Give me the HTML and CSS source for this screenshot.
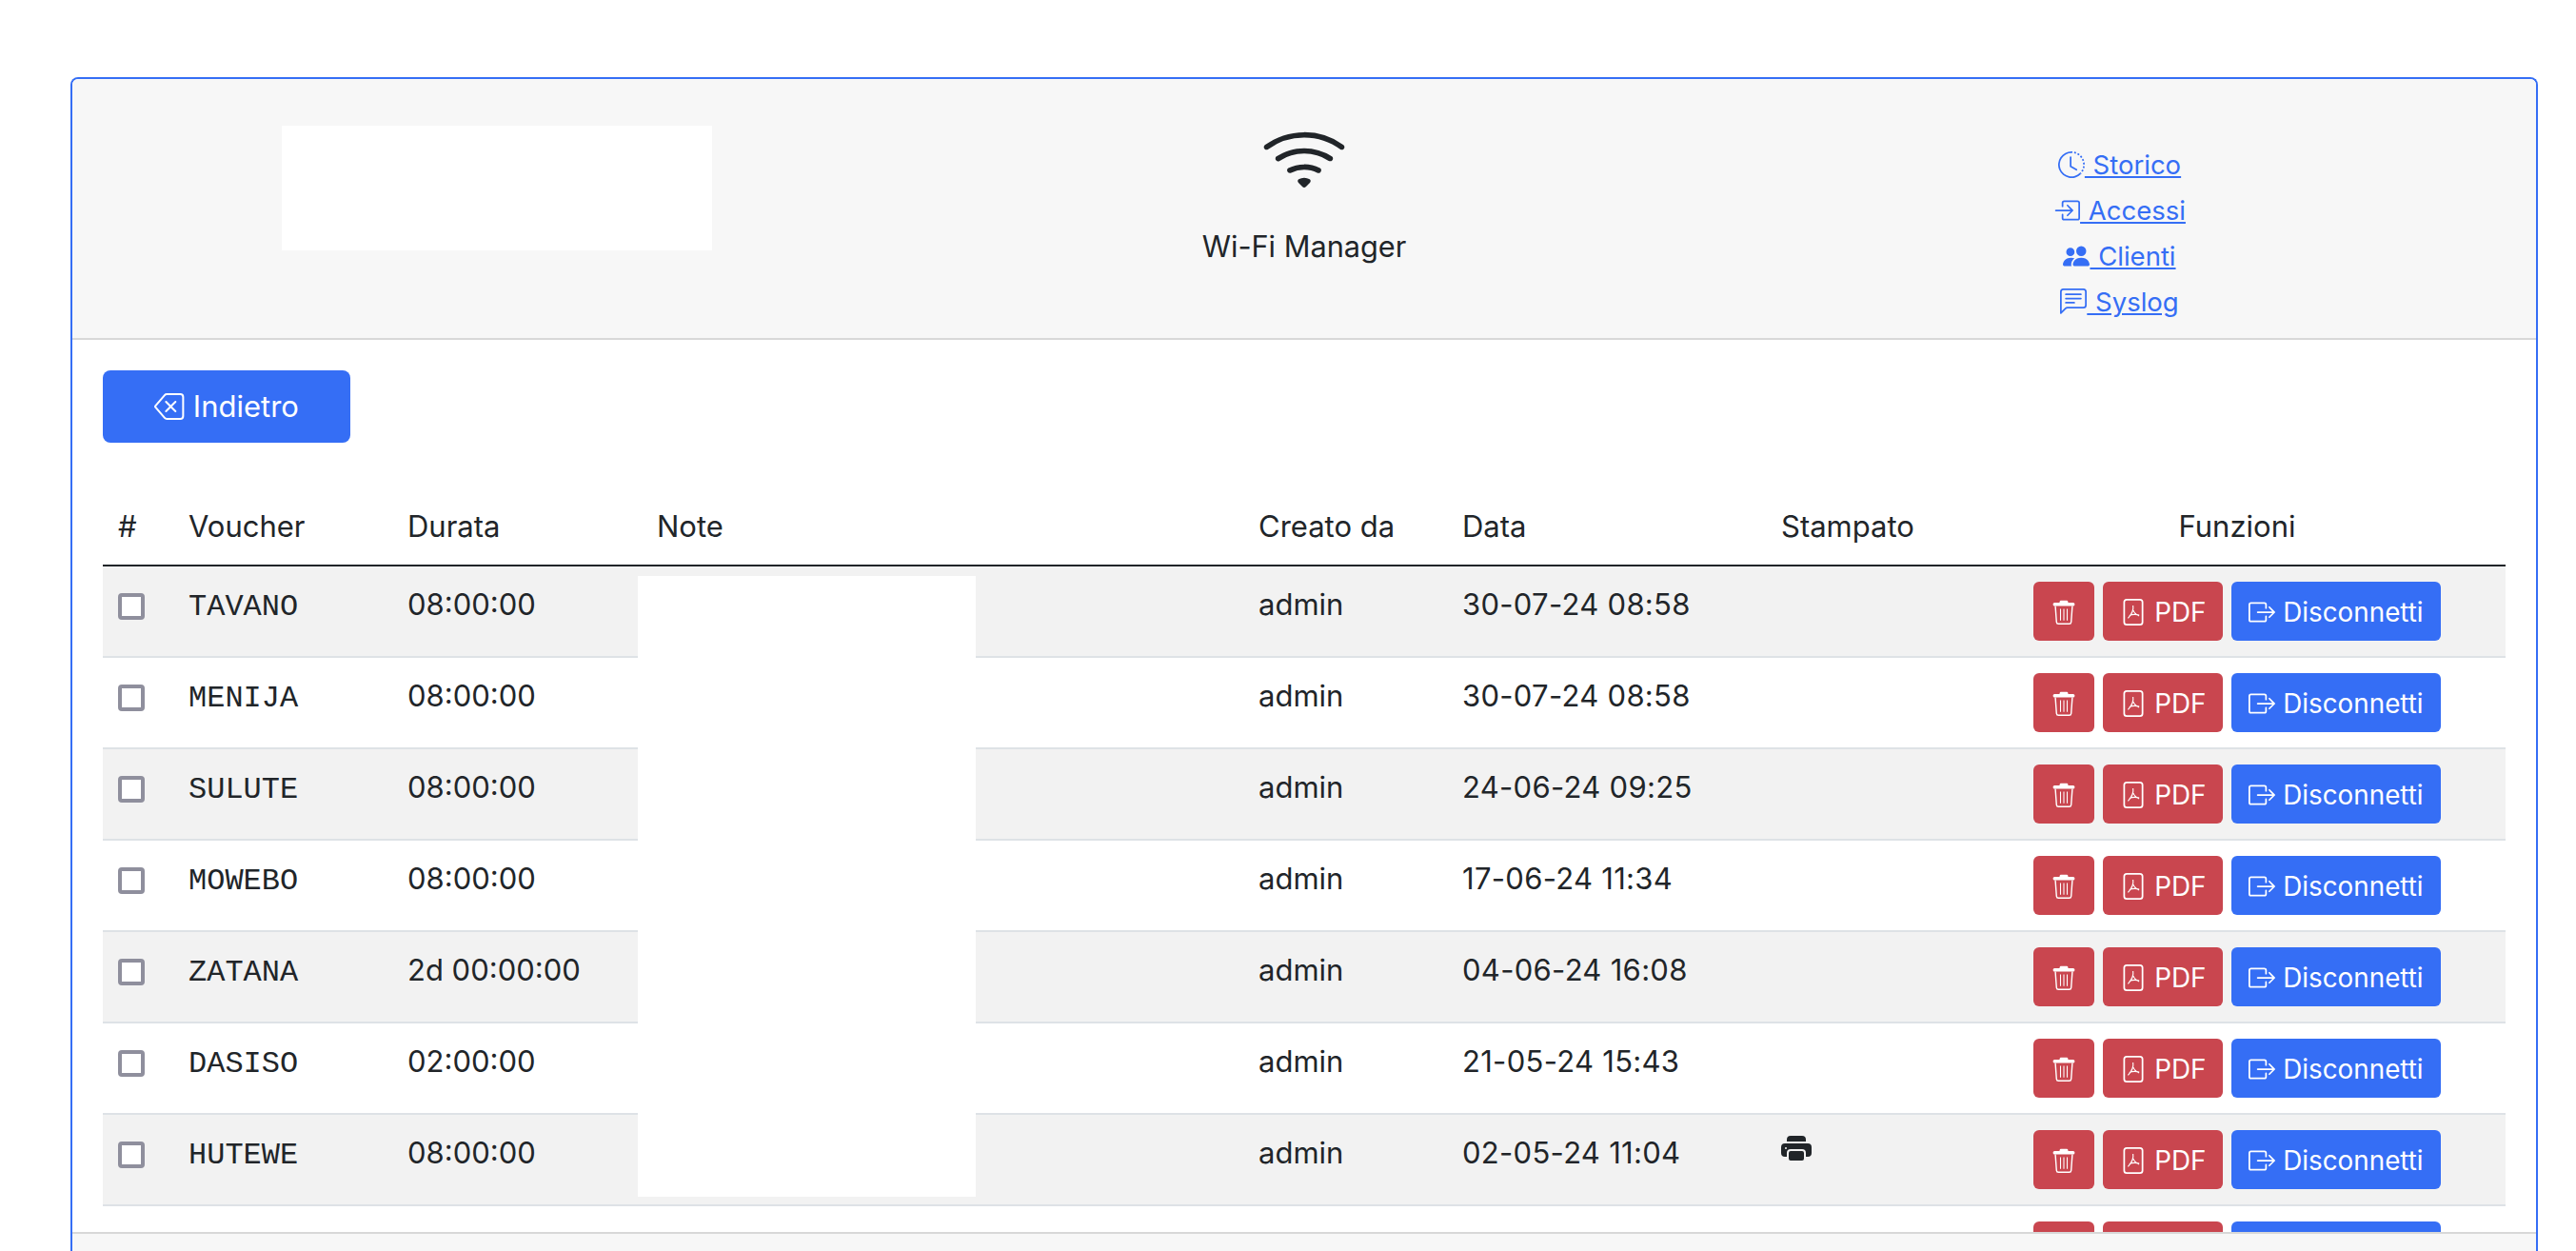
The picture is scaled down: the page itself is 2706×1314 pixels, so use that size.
FILE: index.html
```html
<!DOCTYPE html>
<html lang="en">
<head>
  <meta charset="UTF-8">
  <title>Wi-Fi Manager</title>
  <link rel="stylesheet" href="styles.css">
</head>
<body>
  <svg class="sprite" xmlns="http://www.w3.org/2000/svg">
    <symbol id="i-wifi" viewBox="0 0 16 16">
      <path d="M15.384 6.115a.485.485 0 0 0-.047-.736A12.44 12.44 0 0 0 8 3C5.259 3 2.723 3.882.663 5.379a.485.485 0 0 0-.048.736.518.518 0 0 0 .668.05A11.448 11.448 0 0 1 8 4c2.507 0 4.827.802 6.716 2.164.205.148.49.13.668-.049z"/>
      <path d="M13.229 8.271a.482.482 0 0 0-.063-.745A9.455 9.455 0 0 0 8 6c-1.905 0-3.68.56-5.166 1.526a.48.48 0 0 0-.063.745.525.525 0 0 0 .652.065A8.46 8.46 0 0 1 8 7a8.46 8.46 0 0 1 4.576 1.336c.206.132.48.108.653-.065zm-2.183 2.183c.226-.226.185-.605-.1-.75A6.473 6.473 0 0 0 8 9c-1.06 0-2.062.254-2.946.704-.285.145-.326.524-.1.75l.015.015c.16.16.407.19.611.09A5.478 5.478 0 0 1 8 10c.868 0 1.69.201 2.42.56.203.1.45.07.61-.091l.016-.015zM9.06 12.44c.196-.196.198-.52-.04-.66A1.99 1.99 0 0 0 8 11.5a1.99 1.99 0 0 0-1.02.28c-.238.14-.236.464-.04.66l.706.706a.5.5 0 0 0 .707 0l.707-.707z"/>
    </symbol>
    <symbol id="i-history" viewBox="0 0 16 16">
      <path d="M8.515 1.019A7 7 0 0 0 8 1V0a8 8 0 0 1 .589.022l-.074.997zm2.004.45a7.003 7.003 0 0 0-.985-.299l.219-.976c.383.086.76.2 1.126.342l-.36.933zm1.37.71a7.01 7.01 0 0 0-.439-.27l.493-.87a8.025 8.025 0 0 1 .979.654l-.615.789a6.996 6.996 0 0 0-.418-.302zm1.834 1.79a6.99 6.99 0 0 0-.653-.796l.724-.69c.27.285.52.59.747.91l-.818.576zm.744 1.352a7.08 7.08 0 0 0-.214-.468l.893-.45a7.976 7.976 0 0 1 .45 1.088l-.95.313a7.023 7.023 0 0 0-.179-.483zm.53 2.507a6.991 6.991 0 0 0-.1-1.025l.985-.17c.067.386.106.778.116 1.17l-1 .025zm-.131 1.538c.033-.17.06-.339.081-.51l.993.123a7.957 7.957 0 0 1-.23 1.155l-.964-.267c.046-.165.086-.332.12-.501zm-.952 2.379c.184-.29.346-.594.486-.908l.914.405c-.16.36-.345.706-.555 1.038l-.845-.535zm-.964 1.205c.122-.122.239-.248.35-.378l.758.653a8.073 8.073 0 0 1-.401.432l-.707-.707z"/>
      <path d="M8 1a7 7 0 1 0 4.95 11.95l.707.707A8.001 8.001 0 1 1 8 0v1z"/>
      <path d="M7.5 3a.5.5 0 0 1 .5.5v5.21l3.248 1.856a.5.5 0 0 1-.496.868l-3.5-2A.5.5 0 0 1 7 9V3.5a.5.5 0 0 1 .5-.5z"/>
    </symbol>
    <symbol id="i-login" viewBox="0 0 16 16">
      <path fill-rule="evenodd" d="M6 3.5a.5.5 0 0 1 .5-.5h8a.5.5 0 0 1 .5.5v9a.5.5 0 0 1-.5.5h-8a.5.5 0 0 1-.5-.5v-2a.5.5 0 0 0-1 0v2A1.5 1.5 0 0 0 6.5 14h8a1.5 1.5 0 0 0 1.5-1.5v-9A1.5 1.5 0 0 0 14.5 2h-8A1.5 1.5 0 0 0 5 3.5v2a.5.5 0 0 0 1 0v-2z"/>
      <path fill-rule="evenodd" d="M11.854 8.354a.5.5 0 0 0 0-.708l-3-3a.5.5 0 1 0-.708.708L10.293 7.5H1.5a.5.5 0 0 0 0 1h8.793l-2.147 2.146a.5.5 0 0 0 .708.708l3-3z"/>
    </symbol>
    <symbol id="i-people" viewBox="0 0 16 16">
      <path d="M7 14s-1 0-1-1 1-4 5-4 5 3 5 4-1 1-1 1H7Zm4-6a3 3 0 1 0 0-6 3 3 0 0 0 0 6Zm-5.784 6A2.238 2.238 0 0 1 5 13c0-1.355.68-2.75 1.936-3.72A6.325 6.325 0 0 0 5 9c-4 0-5 3-5 4s1 1 1 1h4.216ZM4.5 8a2.5 2.5 0 1 0 0-5 2.5 2.5 0 0 0 0 5Z"/>
    </symbol>
    <symbol id="i-chat" viewBox="0 0 16 16">
      <path d="M14 1a1 1 0 0 1 1 1v8a1 1 0 0 1-1 1H4.414A2 2 0 0 0 3 11.586l-2 2V2a1 1 0 0 1 1-1h12zM2 0a2 2 0 0 0-2 2v12.793a.5.5 0 0 0 .854.353l2.853-2.853A1 1 0 0 1 4.414 12H14a2 2 0 0 0 2-2V2a2 2 0 0 0-2-2H2z"/>
      <path d="M3 3.5a.5.5 0 0 1 .5-.5h9a.5.5 0 0 1 0 1h-9a.5.5 0 0 1-.5-.5zM3 6a.5.5 0 0 1 .5-.5h9a.5.5 0 0 1 0 1h-9A.5.5 0 0 1 3 6zm0 2.5a.5.5 0 0 1 .5-.5h5a.5.5 0 0 1 0 1h-5a.5.5 0 0 1-.5-.5z"/>
    </symbol>
    <symbol id="i-back" viewBox="0 0 16 16">
      <path d="M5.83 5.146a.5.5 0 0 0 0 .708L7.975 8l-2.147 2.146a.5.5 0 0 0 .707.708l2.147-2.147 2.146 2.147a.5.5 0 0 0 .707-.708L9.39 8l2.146-2.146a.5.5 0 0 0-.707-.708L8.683 7.293 6.536 5.146a.5.5 0 0 0-.707 0z"/>
      <path d="M13.683 1a2 2 0 0 1 2 2v10a2 2 0 0 1-2 2h-7.08a2 2 0 0 1-1.519-.698L.241 8.65a1 1 0 0 1 0-1.302L5.084 1.7A2 2 0 0 1 6.603 1h7.08zm-7.08 1a1 1 0 0 0-.76.35L1 8l4.844 5.65a1 1 0 0 0 .759.35h7.08a1 1 0 0 0 1-1V3a1 1 0 0 0-1-1h-7.08z"/>
    </symbol>
    <symbol id="i-trash" viewBox="0 0 16 16">
      <rect x="5.5" y="1" width="5" height="2.4" rx=".8"/>
      <rect x="1.5" y="2.3" width="13" height="2" rx=".9"/>
      <path d="M2.9 4.3l.7 9.6a1.2 1.2 0 0 0 1.2 1.1h6.4a1.2 1.2 0 0 0 1.2-1.1l.7-9.6" fill="none" stroke="currentColor" stroke-width=".8"/>
      <path d="M6 6v7M8 6v7M10 6v7" fill="none" stroke="currentColor" stroke-width=".6"/>
    </symbol>
    <symbol id="i-pdf" viewBox="0 0 16 16">
      <path d="M4 0a2 2 0 0 0-2 2v12a2 2 0 0 0 2 2h8a2 2 0 0 0 2-2V2a2 2 0 0 0-2-2H4zm0 1h8a1 1 0 0 1 1 1v12a1 1 0 0 1-1 1H4a1 1 0 0 1-1-1V2a1 1 0 0 1 1-1z"/>
      <path d="M7.8 4c.5 2.500-1 5.500-3 7.600M7.900 6.800c.7 1.700 1.700 2.800 3.600 3.400M5.600 10c1.800-.7 3.600-.9 5.900-.2" fill="none" stroke="currentColor" stroke-width=".65"/>
    </symbol>
    <symbol id="i-logout" viewBox="0 0 16 16">
      <path fill-rule="evenodd" d="M10 12.5a.5.5 0 0 1-.5.5h-8a.5.5 0 0 1-.5-.5v-9a.5.5 0 0 1 .5-.5h8a.5.5 0 0 1 .5.5v2a.5.5 0 0 0 1 0v-2A1.5 1.5 0 0 0 9.500 2h-8A1.500 1.500 0 0 0 0 3.500v9A1.500 1.500 0 0 0 1.500 14h8a1.500 1.500 0 0 0 1.500-1.500v-2a.5.5 0 0 0-1 0v2z"/>
      <path fill-rule="evenodd" d="M15.854 8.354a.5.5 0 0 0 0-.708l-3-3a.5.5 0 0 0-.708.708L14.293 7.500H5.500a.5.5 0 0 0 0 1h8.793l-2.147 2.146a.5.5 0 0 0 .708.708l3-3z"/>
    </symbol>
    <symbol id="i-printer" viewBox="0 0 16 16">
      <path d="M5 1a2 2 0 0 0-2 2v1h10V3a2 2 0 0 0-2-2H5zm6 8H5a1 1 0 0 0-1 1v3a1 1 0 0 0 1 1h6a1 1 0 0 0 1-1v-3a1 1 0 0 0-1-1z"/>
      <path d="M0 7a2 2 0 0 1 2-2h12a2 2 0 0 1 2 2v3a2 2 0 0 1-2 2h-1v-2a2 2 0 0 0-2-2H5a2 2 0 0 0-2 2v2H2a2 2 0 0 1-2-2V7zm2.500 1a.5.5 0 1 0 0-1 .5.5 0 0 0 0 1z"/>
    </symbol>
  </svg>

  <div class="card">
    <div class="card-header">
      <div class="head-logo"><div class="logo-box"></div></div>
      <div class="head-title">
        <svg class="wifi-icon"><use href="#i-wifi"/></svg>
        <div>Wi-Fi Manager</div>
      </div>
      <div class="head-links">
        <a href="#"><svg class="icon"><use href="#i-history"/></svg> Storico</a>
        <a href="#"><svg class="icon"><use href="#i-login"/></svg> Accessi</a>
        <a href="#"><svg class="icon"><use href="#i-people"/></svg> Clienti</a>
        <a href="#"><svg class="icon"><use href="#i-chat"/></svg> Syslog</a>
      </div>
    </div>

    <div class="card-body">
      <a href="#" class="btn btn-back"><svg class="icon"><use href="#i-back"/></svg> Indietro</a>

      <table class="vouchers">
        <colgroup>
          <col class="c-check"><col class="c-code"><col class="c-time"><col class="c-note">
          <col class="c-user"><col class="c-date"><col class="c-print"><col class="c-actions">
        </colgroup>
        <thead>
          <tr>
            <th>#</th><th>Voucher</th><th>Durata</th><th>Note</th>
            <th>Creato da</th><th>Data</th><th>Stampato</th><th class="center">Funzioni</th>
          </tr>
        </thead>
        <tbody>
          <tr>
            <td><input type="checkbox"></td><td class="code">TAVANO</td><td>08:00:00</td><td></td>
            <td>admin</td><td class="date">30-07-24 08:58</td><td></td>
            <td><div class="actions"><a href="#" class="btn btn-sm btn-red"><svg class="icon"><use href="#i-trash"/></svg></a><a href="#" class="btn btn-sm btn-red"><svg class="icon"><use href="#i-pdf"/></svg> PDF</a><a href="#" class="btn btn-sm"><svg class="icon"><use href="#i-logout"/></svg> Disconnetti</a></div></td>
          </tr>
          <tr>
            <td><input type="checkbox"></td><td class="code">MENIJA</td><td>08:00:00</td><td></td>
            <td>admin</td><td class="date">30-07-24 08:58</td><td></td>
            <td><div class="actions"><a href="#" class="btn btn-sm btn-red"><svg class="icon"><use href="#i-trash"/></svg></a><a href="#" class="btn btn-sm btn-red"><svg class="icon"><use href="#i-pdf"/></svg> PDF</a><a href="#" class="btn btn-sm"><svg class="icon"><use href="#i-logout"/></svg> Disconnetti</a></div></td>
          </tr>
          <tr>
            <td><input type="checkbox"></td><td class="code">SULUTE</td><td>08:00:00</td><td></td>
            <td>admin</td><td class="date">24-06-24 09:25</td><td></td>
            <td><div class="actions"><a href="#" class="btn btn-sm btn-red"><svg class="icon"><use href="#i-trash"/></svg></a><a href="#" class="btn btn-sm btn-red"><svg class="icon"><use href="#i-pdf"/></svg> PDF</a><a href="#" class="btn btn-sm"><svg class="icon"><use href="#i-logout"/></svg> Disconnetti</a></div></td>
          </tr>
          <tr>
            <td><input type="checkbox"></td><td class="code">MOWEBO</td><td>08:00:00</td><td></td>
            <td>admin</td><td class="date">17-06-24 11:34</td><td></td>
            <td><div class="actions"><a href="#" class="btn btn-sm btn-red"><svg class="icon"><use href="#i-trash"/></svg></a><a href="#" class="btn btn-sm btn-red"><svg class="icon"><use href="#i-pdf"/></svg> PDF</a><a href="#" class="btn btn-sm"><svg class="icon"><use href="#i-logout"/></svg> Disconnetti</a></div></td>
          </tr>
          <tr>
            <td><input type="checkbox"></td><td class="code">ZATANA</td><td>2d 00:00:00</td><td></td>
            <td>admin</td><td class="date">04-06-24 16:08</td><td></td>
            <td><div class="actions"><a href="#" class="btn btn-sm btn-red"><svg class="icon"><use href="#i-trash"/></svg></a><a href="#" class="btn btn-sm btn-red"><svg class="icon"><use href="#i-pdf"/></svg> PDF</a><a href="#" class="btn btn-sm"><svg class="icon"><use href="#i-logout"/></svg> Disconnetti</a></div></td>
          </tr>
          <tr>
            <td><input type="checkbox"></td><td class="code">DASISO</td><td>02:00:00</td><td></td>
            <td>admin</td><td class="date">21-05-24 15:43</td><td></td>
            <td><div class="actions"><a href="#" class="btn btn-sm btn-red"><svg class="icon"><use href="#i-trash"/></svg></a><a href="#" class="btn btn-sm btn-red"><svg class="icon"><use href="#i-pdf"/></svg> PDF</a><a href="#" class="btn btn-sm"><svg class="icon"><use href="#i-logout"/></svg> Disconnetti</a></div></td>
          </tr>
          <tr>
            <td><input type="checkbox"></td><td class="code">HUTEWE</td><td>08:00:00</td><td></td>
            <td>admin</td><td class="date">02-05-24 11:04</td><td><svg class="print-icon"><use href="#i-printer"/></svg></td>
            <td><div class="actions"><a href="#" class="btn btn-sm btn-red"><svg class="icon"><use href="#i-trash"/></svg></a><a href="#" class="btn btn-sm btn-red"><svg class="icon"><use href="#i-pdf"/></svg> PDF</a><a href="#" class="btn btn-sm"><svg class="icon"><use href="#i-logout"/></svg> Disconnetti</a></div></td>
          </tr>
          <tr>
            <td></td><td></td><td></td><td></td><td></td><td></td><td></td>
            <td><div class="actions"><a href="#" class="btn btn-sm btn-red"><svg class="icon"><use href="#i-trash"/></svg></a><a href="#" class="btn btn-sm btn-red"><svg class="icon"><use href="#i-pdf"/></svg> PDF</a><a href="#" class="btn btn-sm"><svg class="icon"><use href="#i-logout"/></svg> Disconnetti</a></div></td>
          </tr>
        </tbody>
      </table>

      <!-- notes column is blanked out in the capture -->
      <div class="note-mask"></div>
    </div>

    <div class="card-footer"></div>
  </div>
</body>
</html>
```

FILE: styles.css
```css
html, body {
  height: 100%;
  overflow: hidden;
}

body {
  margin: 0;
  padding: 81px 40px 0 74px;
  box-sizing: border-box;
  background: #fff;
  color: #212529;
  font-family: Inter, "Noto Sans", sans-serif;
  font-size: 31px;
  line-height: 48px;
}

a {
  color: #356ef5;
}

.sprite {
  display: none;
}

.icon {
  width: 28px;
  height: 28px;
  fill: currentColor;
  vertical-align: -4px;
}

/* Card */
.card {
  display: flex;
  flex-direction: column;
  height: 1231px;
  border: 2px solid #356ef5;
  border-bottom: none;
  border-radius: 8px 8px 0 0;
  overflow: hidden;
}

.card-header {
  display: grid;
  grid-template-columns: 892px 804px 892px;
  height: 272px;
  flex: none;
  background: #f7f7f7;
  border-bottom: 2px solid #d8d8d8;
}

.head-logo {
  display: flex;
  justify-content: center;
  padding-top: 49px;
}

.logo-box {
  width: 452px;
  height: 131px;
  background: #fff;
}

.head-title {
  text-align: center;
  padding-top: 39px;
  font-size: 30.7px;
}

.wifi-icon {
  display: block;
  width: 90px;
  height: 90px;
  margin: 0 auto 23px;
  fill: currentColor;
}

.head-links {
  display: flex;
  flex-direction: column;
  align-items: center;
  padding: 66px 0 0 17px;
  font-size: 27.5px;
  word-spacing: 1px;
}

/* Body */
.card-body {
  position: relative;
  height: 937px;
  flex: none;
  box-sizing: border-box;
  padding: 32px;
  overflow: hidden;
}

.note-mask {
  position: absolute;
  left: 594px;
  top: 248px;
  width: 355px;
  height: 652px;
  background: #fff;
}

/* Buttons */
.btn {
  display: inline-block;
  box-sizing: border-box;
  height: 76px;
  padding: 14px 0;
  border-radius: 8px;
  background: #356ef5;
  color: #fff;
  text-decoration: none;
  white-space: nowrap;
}

.btn-back {
  width: 260px;
  text-align: center;
}

.btn-back .icon {
  width: 32px;
  height: 32px;
  vertical-align: -5px;
}

.btn-sm {
  height: 62px;
  padding: 9px 18px 7px;
  border-radius: 6px;
  font-size: 27.8px;
  line-height: 46px;
}

.btn-red {
  background: #c9464f;
}

.actions {
  display: flex;
  justify-content: center;
  gap: 9px;
}

/* Table */
.vouchers {
  width: 2524px;
  margin-top: 48px;
  table-layout: fixed;
  border-collapse: collapse;
}

.c-check { width: 74px; }
.c-code { width: 230px; }
.c-time { width: 262px; }
.c-note { width: 632px; }
.c-user { width: 214px; }
.c-date { width: 335px; }
.c-print { width: 213px; }
.c-actions { width: 564px; }

.vouchers th,
.vouchers td {
  padding: 16px;
  text-align: left;
  vertical-align: top;
  font-weight: 400;
}

.vouchers thead th {
  border-bottom: 2px solid #212529;
}

.vouchers tbody td {
  height: 62px;
  border-bottom: 2px solid #dee2e6;
}

.vouchers tbody tr:nth-child(odd) td {
  background: #f2f2f2;
}

.vouchers .center {
  text-align: center;
}

.vouchers .code {
  padding-top: 19px;
  padding-bottom: 13px;
  font-family: "Liberation Mono", monospace;
  font-size: 32px;
}

.vouchers .date {
  letter-spacing: .3px;
}

input[type="checkbox"] {
  appearance: none;
  display: block;
  box-sizing: border-box;
  width: 28px;
  height: 28px;
  margin: 12px 0 0;
  border: 4px solid #8f8f9d;
  border-radius: 4px;
  background: #fff;
}

.print-icon {
  width: 32px;
  height: 32px;
  fill: currentColor;
  vertical-align: -1px;
}

.card-footer {
  flex: none;
  height: 18px;
  background: #f7f7f7;
  border-top: 2px solid #d8d8d8;
}
```
